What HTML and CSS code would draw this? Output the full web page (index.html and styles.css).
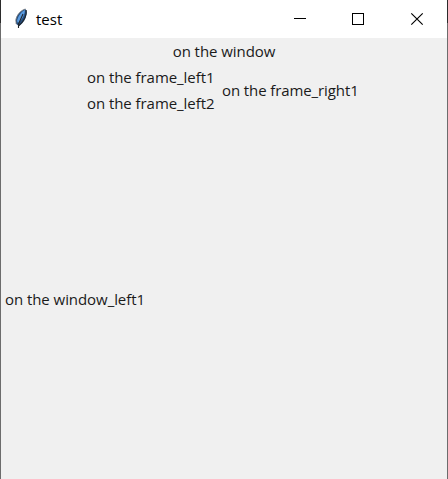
FILE: index.html
```html
<!DOCTYPE html>
<html lang="en">
<head>
<meta charset="utf-8">
<title>test</title>
<link rel="stylesheet" href="styles.css">
</head>
<body>
<div class="window">
  <header class="titlebar">
    <svg class="feather" width="14" height="22" viewBox="0 0 14 22">
      <path d="M11.5 1 C7 2 2.6 7 1.8 12 L2.2 16 L5 18 C9.5 15 12.5 10 12.8 4Z" fill="#244e80"/>
      <path d="M11 2 C7 4 4 8 3 13 L4 15 C7.5 12 10.5 8 11 2Z" fill="#5a9be0"/>
      <path d="M11.5 1 C7 2 2.6 7 1.8 12 L2.2 16" fill="none" stroke="#777" stroke-width=".8"/>
      <path d="M12.2 2 C12.8 8 9 14 5 17.5 M9 6 L4.5 16 L4.5 20" fill="none" stroke="#20252b" stroke-width="1.1"/>
    </svg>
    <span class="title">test</span>
    <svg class="controls" width="131" height="14" viewBox="0 0 131 14" fill="none" stroke="#000">
      <path d="M0 6.5H12"/>
      <rect x="58.5" y="1.5" width="11" height="11"/>
      <path d="M117.3 1.3L128.7 12.7M128.7 1.3L117.3 12.7" stroke-width="1.15"/>
    </svg>
  </header>
  <main class="content">
    <div class="label top">on the window</div>
    <div class="frame">
      <div class="left">
        <div class="label">on the frame_left1</div>
        <div class="label">on the frame_left2</div>
      </div>
      <div class="label right">on the frame_right1</div>
    </div>
    <div class="side"><div class="label">on the window_left1</div></div>
  </main>
</div>
</body>
</html>
```
FILE: styles.css
```css
* { box-sizing: border-box; }
body { margin: 0; font-family: "Open Sans", "Noto Sans", sans-serif; color: #1a1a1a; }
.window {
  width: 448px;
  height: 479px;
  display: flex;
  flex-direction: column;
  padding: 0 1px;
  background: linear-gradient(#2b2b2b 23px, #6c6c6c 23px);
}
.titlebar {
  height: 38px;
  display: flex;
  align-items: center;
  background: #fff;
  padding: 0 21px 0 13px;
}
.feather { margin-right: 8px; }
.title { font-size: 15px; line-height: 18px; padding-bottom: 1px; color: #000; flex: 1; }
.controls { margin-right: 1px; }
.content { flex: 1; display: flex; flex-direction: column; background: #f0f0f0; }
.label { font-size: 15px; line-height: 26px; height: 26px; white-space: nowrap; letter-spacing: -0.06px; }
.top { text-align: center; }
.frame { display: flex; align-items: center; padding-left: 86px; }
.left { width: 135px; }
.right { letter-spacing: -0.1px; }
.side { flex: 1; display: flex; align-items: center; padding: 2px 0 0 4px; }
```
